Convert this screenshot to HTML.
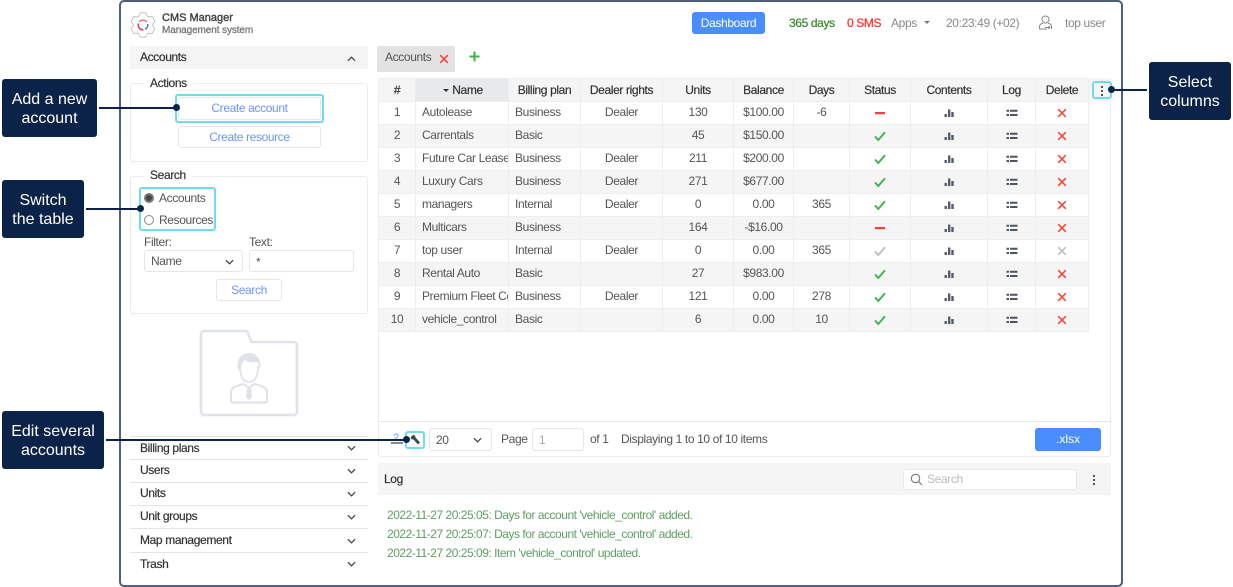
<!DOCTYPE html>
<html lang="en">
<head>
<meta charset="utf-8">
<title>CMS Manager</title>
<style>
html,body{margin:0;padding:0;background:#fff;}
body{position:relative;width:1233px;height:587px;overflow:hidden;font-family:"Liberation Sans",sans-serif;font-size:12px;color:#555;}
div,span,svg{box-sizing:border-box;}
.a{position:absolute;}
.t{position:absolute;white-space:nowrap;line-height:14px;letter-spacing:-.37px;}
.d{color:#333;-webkit-text-stroke:.2px #333;}
.call{position:absolute;background:#0b2349;color:#fff;border-radius:3px;text-align:center;font-size:16px;line-height:19px;padding-top:11px;}
.ln{position:absolute;background:#0b2349;height:2px;}
.dot{position:absolute;background:#0b2349;border-radius:50%;width:7px;height:7px;}
.hl{position:absolute;border:2px solid #6fdcee;border-radius:3px;}
.box{position:absolute;border:1px solid #ececec;border-radius:3px;background:#fff;}
.btn{position:absolute;border:1px solid #e6e6e6;border-radius:3px;background:#fff;color:#6f94ff;text-align:center;line-height:20px;letter-spacing:-.37px;}
.sep{position:absolute;left:130px;width:238px;height:1px;background:#e4e4e4;}
table{position:absolute;left:378px;top:78px;width:710px;border-collapse:collapse;table-layout:fixed;font-size:12px;}
th,td{border:1px solid #eee;padding:0;height:22px;text-align:center;white-space:nowrap;overflow:hidden;letter-spacing:-.37px;}
td{height:20px;padding-bottom:2px;}
th{background:#f5f5f5;color:#333;font-weight:normal;-webkit-text-stroke:.2px #333;}
tr:nth-child(odd) td{background:#f5f5f5;}
td.l{text-align:left;padding-left:6px;}
td svg{display:block;margin:0 auto;width:12px;height:12px;transform:translateY(1px);}
</style>
</head>
<body>
<svg width="0" height="0" style="position:absolute">
<defs>
<symbol id="ok" viewBox="0 0 12 12"><path d="M1 6.500 4.300 10 11 2.200" fill="none" stroke="#3bb54a" stroke-width="1.900"/></symbol>
<symbol id="okg" viewBox="0 0 12 12"><path d="M1 6.500 4.300 10 11 2.200" fill="none" stroke="#bdbdbd" stroke-width="1.900"/></symbol>
<symbol id="no" viewBox="0 0 12 12"><rect x="1" y="5" width="10" height="2.200" fill="#f44336"/></symbol>
<symbol id="x" viewBox="0 0 12 12"><path d="M2.200 2.200 9.800 9.800M9.800 2.200 2.200 9.800" fill="none" stroke="#f44336" stroke-width="1.500"/></symbol>
<symbol id="xg" viewBox="0 0 12 12"><path d="M2.200 2.200 9.800 9.800M9.800 2.200 2.200 9.800" fill="none" stroke="#bdbdbd" stroke-width="1.500"/></symbol>
<symbol id="bars" viewBox="0 0 12 12"><path d="M1.500 7h2.400v3H1.500zM5 2.500h2.400V10H5zM8.300 5h2.400v5H8.300z" fill="#555d6b"/></symbol>
<symbol id="list" viewBox="0 0 12 12"><path d="M.5 2.800h2.500v2H.5zM4 2.800h7.500v2H4zM.5 7h2.500v2H.5zM4 7h7.500v2H4z" fill="#4d5563"/></symbol>
<symbol id="chev" viewBox="0 0 10 6"><path d="M1 1 5 5 9 1" fill="none" stroke="#444" stroke-width="1.400"/></symbol>
</defs>
</svg>

<!-- frame -->
<div class="a" style="left:119px;top:0;width:1004px;height:587px;border:2px solid #4f5f7c;border-radius:5px;"></div>

<!-- header -->
<svg class="a" style="left:130px;top:12px" width="26" height="26" viewBox="0 0 26 26">
<path d="M10.400 .8 15.600 .8 17.750 4.800 22.300 4.600 24.900 9.100 22.500 13 24.900 16.900 22.300 21.400 17.750 21.200 15.600 25.200 10.400 25.200 8.250 21.200 3.700 21.400 1.100 16.900 3.500 13 1.100 9.100 3.700 4.600 8.250 4.800z" fill="#fff" stroke="#c4c4c4" stroke-width="1" stroke-linejoin="round"/>
<path d="M8.500 11.500A4.800 4.800 0 0 0 13.500 17.800" fill="none" stroke="#e8365d" stroke-width="1.500"/>
<path d="M15 17.300A4.800 4.800 0 0 0 17.700 12" fill="none" stroke="#3d7fc4" stroke-width="1.500"/>
<path d="M9.200 10A4.800 4.800 0 0 1 16.800 10" fill="none" stroke="#e8606d" stroke-width="1.200"/>
</svg>
<div class="t" style="left:162px;top:11px;font-size:11px;letter-spacing:0;color:#444;-webkit-text-stroke:.4px #444;">CMS Manager</div>
<div class="t" style="left:162px;top:24px;font-size:10px;letter-spacing:-.1px;color:#777;-webkit-text-stroke:.3px #777;">Management system</div>

<div class="a" style="left:692px;top:12px;width:73px;height:22px;background:#4a8dff;border-radius:3px;color:#fff;text-align:center;line-height:22px;letter-spacing:-.37px;">Dashboard</div>
<div class="t" style="left:789px;top:16px;color:#3c8a2e;-webkit-text-stroke:.25px #3c8a2e;">365 days</div>
<div class="t" style="left:847px;top:16px;color:#f33;-webkit-text-stroke:.25px #f33;">0 SMS</div>
<div class="t" style="left:891px;top:16px;color:#888;">Apps</div>
<div class="a" style="left:924px;top:21px;width:0;height:0;border-left:3px solid transparent;border-right:3px solid transparent;border-top:3px solid #777;"></div>
<div class="t" style="left:946px;top:16px;color:#888;">20:23:49 (+02)</div>
<svg class="a" style="left:1038px;top:15px" width="15" height="16" viewBox="0 0 15 16"><circle cx="7.500" cy="4.500" r="3.500" fill="none" stroke="#888"/><path d="M1.500 14v-2.500c0-2 2-3 3.500-3.300M13.500 14v-2.500c0-2-2-3-3.500-3.300M1.500 14H9M7 12.500h5M10.500 11l1.500 1.500-1.500 1.500" fill="none" stroke="#888"/></svg>
<div class="t" style="left:1065px;top:16px;color:#888;">top user</div>

<!-- left panel -->
<div class="a" style="left:130px;top:46px;width:238px;height:23px;background:#f5f5f5;"></div>
<div class="t d" style="left:140px;top:50px;">Accounts</div>
<svg class="a" style="left:347px;top:56px;transform:rotate(180deg)" width="9" height="6" viewBox="0 0 10 6"><use href="#chev"/></svg>

<div class="box" style="left:130px;top:83px;width:238px;height:79px;"></div>
<div class="t d" style="left:144px;top:76px;background:#fff;padding:0 6px;">Actions</div>
<div class="btn" style="left:178px;top:97px;width:143px;height:23px;">Create account</div>
<div class="btn" style="left:178px;top:126px;width:143px;height:22px;">Create resource</div>
<div class="hl" style="left:175px;top:94px;width:149px;height:29px;"></div>

<div class="box" style="left:130px;top:176px;width:238px;height:138px;"></div>
<div class="t d" style="left:144px;top:168px;background:#fff;padding:0 6px;">Search</div>
<div class="a" style="left:144px;top:193px;width:10px;height:10px;border-radius:50%;border:2px solid #777;background:#444;"></div>
<div class="t" style="left:159px;top:191px;">Accounts</div>
<div class="a" style="left:144px;top:215px;width:10px;height:10px;border-radius:50%;border:1px solid #888;background:#fff;"></div>
<div class="t" style="left:159px;top:213px;">Resources</div>
<div class="hl" style="left:139px;top:187px;width:77px;height:44px;"></div>
<div class="t" style="left:144px;top:235px;">Filter:</div>
<div class="t" style="left:249px;top:235px;">Text:</div>
<div class="box" style="left:144px;top:250px;width:99px;height:22px;border-color:#e6e6e6;"></div>
<div class="t" style="left:151px;top:254px;">Name</div>
<svg class="a" style="left:225px;top:259px" width="9" height="6" viewBox="0 0 10 6"><use href="#chev"/></svg>
<div class="box" style="left:249px;top:250px;width:105px;height:22px;border-color:#e6e6e6;"></div>
<div class="t" style="left:256px;top:255px;">*</div>
<div class="btn" style="left:216px;top:279px;width:66px;height:22px;">Search</div>

<!-- folder -->
<svg class="a" style="left:199px;top:329px" width="100" height="88" viewBox="0 0 100 88">
<path d="M2 5a3 3 0 0 1 3-3h43l4.500 11H95a3 3 0 0 1 3 3v67a3 3 0 0 1-3 3H5a3 3 0 0 1-3-3z" fill="#fff" stroke="#e0e3e8" stroke-width="2.600" stroke-linejoin="round"/>
<g transform="translate(0 7)">
<path d="M41 30c0 10 3 16 9 16s9-6 9-16" fill="none" stroke="#dfe2e7" stroke-width="1.800"/>
<path d="M39 34c-2-12 4-17 11-17s13 5 11 17c-1-4-1-6-3-8-4 1-10 0-13-2-1 3-4 5-4 10z" fill="#dfe2e7"/>
<path d="M32 65V56c0-4 4-6 13-8l5 4 5-4c9 2 13 4 13 8v9a1.500 1.500 0 0 1-1.500 1.500h-33A1.500 1.500 0 0 1 32 65z" fill="none" stroke="#dfe2e7" stroke-width="2"/>
<path d="M48 52h4l1 9-3 3-3-3z" fill="#dfe2e7"/>
</g>
</svg>

<!-- accordion -->
<div class="sep" style="top:436px"></div>
<div class="sep" style="top:459px"></div>
<div class="sep" style="top:482px"></div>
<div class="sep" style="top:505px"></div>
<div class="sep" style="top:528px"></div>
<div class="sep" style="top:552px"></div>
<div class="t d" style="left:140px;top:441px;">Billing plans</div>
<div class="t d" style="left:140px;top:463px;">Users</div>
<div class="t d" style="left:140px;top:486px;">Units</div>
<div class="t d" style="left:140px;top:509px;">Unit groups</div>
<div class="t d" style="left:140px;top:533px;">Map management</div>
<div class="t d" style="left:140px;top:557px;">Trash</div>
<svg class="a" style="left:347px;top:445px" width="9" height="6" viewBox="0 0 10 6"><use href="#chev"/></svg>
<svg class="a" style="left:347px;top:468px" width="9" height="6" viewBox="0 0 10 6"><use href="#chev"/></svg>
<svg class="a" style="left:347px;top:491px" width="9" height="6" viewBox="0 0 10 6"><use href="#chev"/></svg>
<svg class="a" style="left:347px;top:514px" width="9" height="6" viewBox="0 0 10 6"><use href="#chev"/></svg>
<svg class="a" style="left:347px;top:538px" width="9" height="6" viewBox="0 0 10 6"><use href="#chev"/></svg>
<svg class="a" style="left:347px;top:561px" width="9" height="6" viewBox="0 0 10 6"><use href="#chev"/></svg>

<!-- tab -->
<div class="a" style="left:377px;top:46px;width:78px;height:26px;background:#e2e2e2;border-radius:2px;"></div>
<div class="t" style="left:385px;top:50px;">Accounts</div>
<svg class="a" style="left:438px;top:53px" width="12" height="12" viewBox="0 0 12 12"><use href="#x"/></svg>
<svg class="a" style="left:469px;top:51px" width="11" height="11" viewBox="0 0 12 12"><path d="M6 .5v11M.5 6h11" stroke="#3bb54a" stroke-width="2.200"/></svg>

<!-- grid panel -->
<div class="box" style="left:378px;top:78px;width:733px;height:379px;"></div>
<div class="a" style="left:378px;top:78px;width:733px;height:23px;background:#f5f5f5;"></div>
<div class="a" style="left:378px;top:421px;width:733px;height:1px;background:#e6e6e6;"></div>

<table>
<colgroup><col style="width:37px"><col style="width:93px"><col style="width:72px"><col style="width:82px"><col style="width:71px"><col style="width:60px"><col style="width:56px"><col style="width:61px"><col style="width:77px"><col style="width:48px"><col style="width:53px"></colgroup>
<tr><th>#</th><th style="background:#e8e9eb;padding-left:2px;"><span style="display:inline-block;width:0;height:0;border-left:3px solid transparent;border-right:3px solid transparent;border-top:3px solid #333;vertical-align:2px;margin-right:3px;"></span>Name</th><th>Billing plan</th><th>Dealer rights</th><th>Units</th><th>Balance</th><th>Days</th><th>Status</th><th>Contents</th><th>Log</th><th>Delete</th></tr>
<tr><td>1</td><td class="l">Autolease</td><td class="l">Business</td><td>Dealer</td><td>130</td><td>$100.00</td><td>-6</td><td><svg><use href="#no"/></svg></td><td><svg><use href="#bars"/></svg></td><td><svg><use href="#list"/></svg></td><td><svg><use href="#x"/></svg></td></tr>
<tr><td>2</td><td class="l">Carrentals</td><td class="l">Basic</td><td></td><td>45</td><td>$150.00</td><td></td><td><svg><use href="#ok"/></svg></td><td><svg><use href="#bars"/></svg></td><td><svg><use href="#list"/></svg></td><td><svg><use href="#x"/></svg></td></tr>
<tr><td>3</td><td class="l">Future Car Lease</td><td class="l">Business</td><td>Dealer</td><td>211</td><td>$200.00</td><td></td><td><svg><use href="#ok"/></svg></td><td><svg><use href="#bars"/></svg></td><td><svg><use href="#list"/></svg></td><td><svg><use href="#x"/></svg></td></tr>
<tr><td>4</td><td class="l">Luxury Cars</td><td class="l">Business</td><td>Dealer</td><td>271</td><td>$677.00</td><td></td><td><svg><use href="#ok"/></svg></td><td><svg><use href="#bars"/></svg></td><td><svg><use href="#list"/></svg></td><td><svg><use href="#x"/></svg></td></tr>
<tr><td>5</td><td class="l">managers</td><td class="l">Internal</td><td>Dealer</td><td>0</td><td>0.00</td><td>365</td><td><svg><use href="#ok"/></svg></td><td><svg><use href="#bars"/></svg></td><td><svg><use href="#list"/></svg></td><td><svg><use href="#x"/></svg></td></tr>
<tr><td>6</td><td class="l">Multicars</td><td class="l">Business</td><td></td><td>164</td><td>-$16.00</td><td></td><td><svg><use href="#no"/></svg></td><td><svg><use href="#bars"/></svg></td><td><svg><use href="#list"/></svg></td><td><svg><use href="#x"/></svg></td></tr>
<tr><td>7</td><td class="l">top user</td><td class="l">Internal</td><td>Dealer</td><td>0</td><td>0.00</td><td>365</td><td><svg><use href="#okg"/></svg></td><td><svg><use href="#bars"/></svg></td><td><svg><use href="#list"/></svg></td><td><svg><use href="#xg"/></svg></td></tr>
<tr><td>8</td><td class="l">Rental Auto</td><td class="l">Basic</td><td></td><td>27</td><td>$983.00</td><td></td><td><svg><use href="#ok"/></svg></td><td><svg><use href="#bars"/></svg></td><td><svg><use href="#list"/></svg></td><td><svg><use href="#x"/></svg></td></tr>
<tr><td>9</td><td class="l">Premium Fleet Co</td><td class="l">Business</td><td>Dealer</td><td>121</td><td>0.00</td><td>278</td><td><svg><use href="#ok"/></svg></td><td><svg><use href="#bars"/></svg></td><td><svg><use href="#list"/></svg></td><td><svg><use href="#x"/></svg></td></tr>
<tr><td>10</td><td class="l">vehicle_control</td><td class="l">Basic</td><td></td><td>6</td><td>0.00</td><td>10</td><td><svg><use href="#ok"/></svg></td><td><svg><use href="#bars"/></svg></td><td><svg><use href="#list"/></svg></td><td><svg><use href="#x"/></svg></td></tr>
</table>

<!-- column menu -->
<div class="a" style="left:1101px;top:86px;width:2px;height:2px;background:#555;"></div>
<div class="a" style="left:1101px;top:90px;width:2px;height:2px;background:#555;"></div>
<div class="a" style="left:1101px;top:94px;width:2px;height:2px;background:#555;"></div>
<div class="hl" style="left:1092px;top:81px;width:20px;height:18px;"></div>

<!-- pager -->
<div class="t" style="left:393px;top:431px;color:#6f94ff;font-size:11px;">2</div>
<div class="a" style="left:391px;top:442px;width:12px;height:2px;background:#888;"></div>
<svg class="a" style="left:409px;top:434px" width="12" height="12" viewBox="0 0 12 12"><path d="M1.500 3.500 3 2l1-1 2 .5.500 2L11 8.500 9 10.500 4.500 5.500l-2-.2z" fill="#444"/></svg>
<div class="hl" style="left:405px;top:431px;width:20px;height:18px;"></div>
<div class="box" style="left:429px;top:428px;width:63px;height:23px;border-color:#e6e6e6;"></div>
<div class="t" style="left:436px;top:433px;">20</div>
<svg class="a" style="left:473px;top:437px" width="9" height="6" viewBox="0 0 10 6"><use href="#chev"/></svg>
<div class="t" style="left:501px;top:432px;">Page</div>
<div class="box" style="left:532px;top:428px;width:52px;height:23px;border-color:#e6e6e6;"></div>
<div class="t" style="left:539px;top:433px;color:#aaa;">1</div>
<div class="t" style="left:590px;top:432px;">of 1</div>
<div class="t" style="left:621px;top:432px;">Displaying 1 to 10 of 10 items</div>
<div class="a" style="left:1035px;top:428px;width:66px;height:23px;background:#4a8dff;border-radius:3px;color:#fff;text-align:center;line-height:22px;">.xlsx</div>

<!-- log -->
<div class="a" style="left:378px;top:463px;width:733px;height:32px;background:#f5f5f5;"></div>
<div class="t d" style="left:384px;top:472px;">Log</div>
<div class="box" style="left:903px;top:469px;width:174px;height:21px;border-color:#e8e8e8;"></div>
<svg class="a" style="left:910px;top:473px" width="13" height="13" viewBox="0 0 13 13"><circle cx="5.500" cy="5.500" r="4.200" fill="none" stroke="#777" stroke-width="1.100"/><path d="M8.600 8.600 12 12" stroke="#777" stroke-width="1.100"/></svg>
<div class="t" style="left:927px;top:472px;color:#bbb;">Search</div>
<div class="a" style="left:1093px;top:475px;width:2px;height:2px;background:#555;"></div>
<div class="a" style="left:1093px;top:479px;width:2px;height:2px;background:#555;"></div>
<div class="a" style="left:1093px;top:483px;width:2px;height:2px;background:#555;"></div>
<div class="t" style="left:387px;top:508px;color:#5f9e63;letter-spacing:-.48px;">2022-11-27 20:25:05: Days for account 'vehicle_control' added.</div>
<div class="t" style="left:387px;top:527px;color:#5f9e63;letter-spacing:-.48px;">2022-11-27 20:25:07: Days for account 'vehicle_control' added.</div>
<div class="t" style="left:387px;top:546px;color:#5f9e63;letter-spacing:-.48px;">2022-11-27 20:25:09: Item 'vehicle_control' updated.</div>

<!-- callouts -->
<div class="call" style="left:2px;top:79px;width:95px;height:58px;">Add a new<br>account</div>
<div class="ln" style="left:99px;top:107px;width:76px;"></div>
<div class="dot" style="left:173px;top:104px;"></div>
<div class="call" style="left:2px;top:180px;width:82px;height:58px;">Switch<br>the table</div>
<div class="ln" style="left:86px;top:208px;width:52px;"></div>
<div class="dot" style="left:137px;top:205px;"></div>
<div class="call" style="left:2px;top:411px;width:102px;height:58px;">Edit several<br>accounts</div>
<div class="ln" style="left:106px;top:439px;width:298px;"></div>
<div class="dot" style="left:403px;top:436px;"></div>
<div class="call" style="left:1149px;top:62px;width:82px;height:58px;">Select<br>columns</div>
<div class="ln" style="left:1115px;top:89px;width:32px;"></div>
<div class="dot" style="left:1108px;top:86px;"></div>
</body>
</html>
